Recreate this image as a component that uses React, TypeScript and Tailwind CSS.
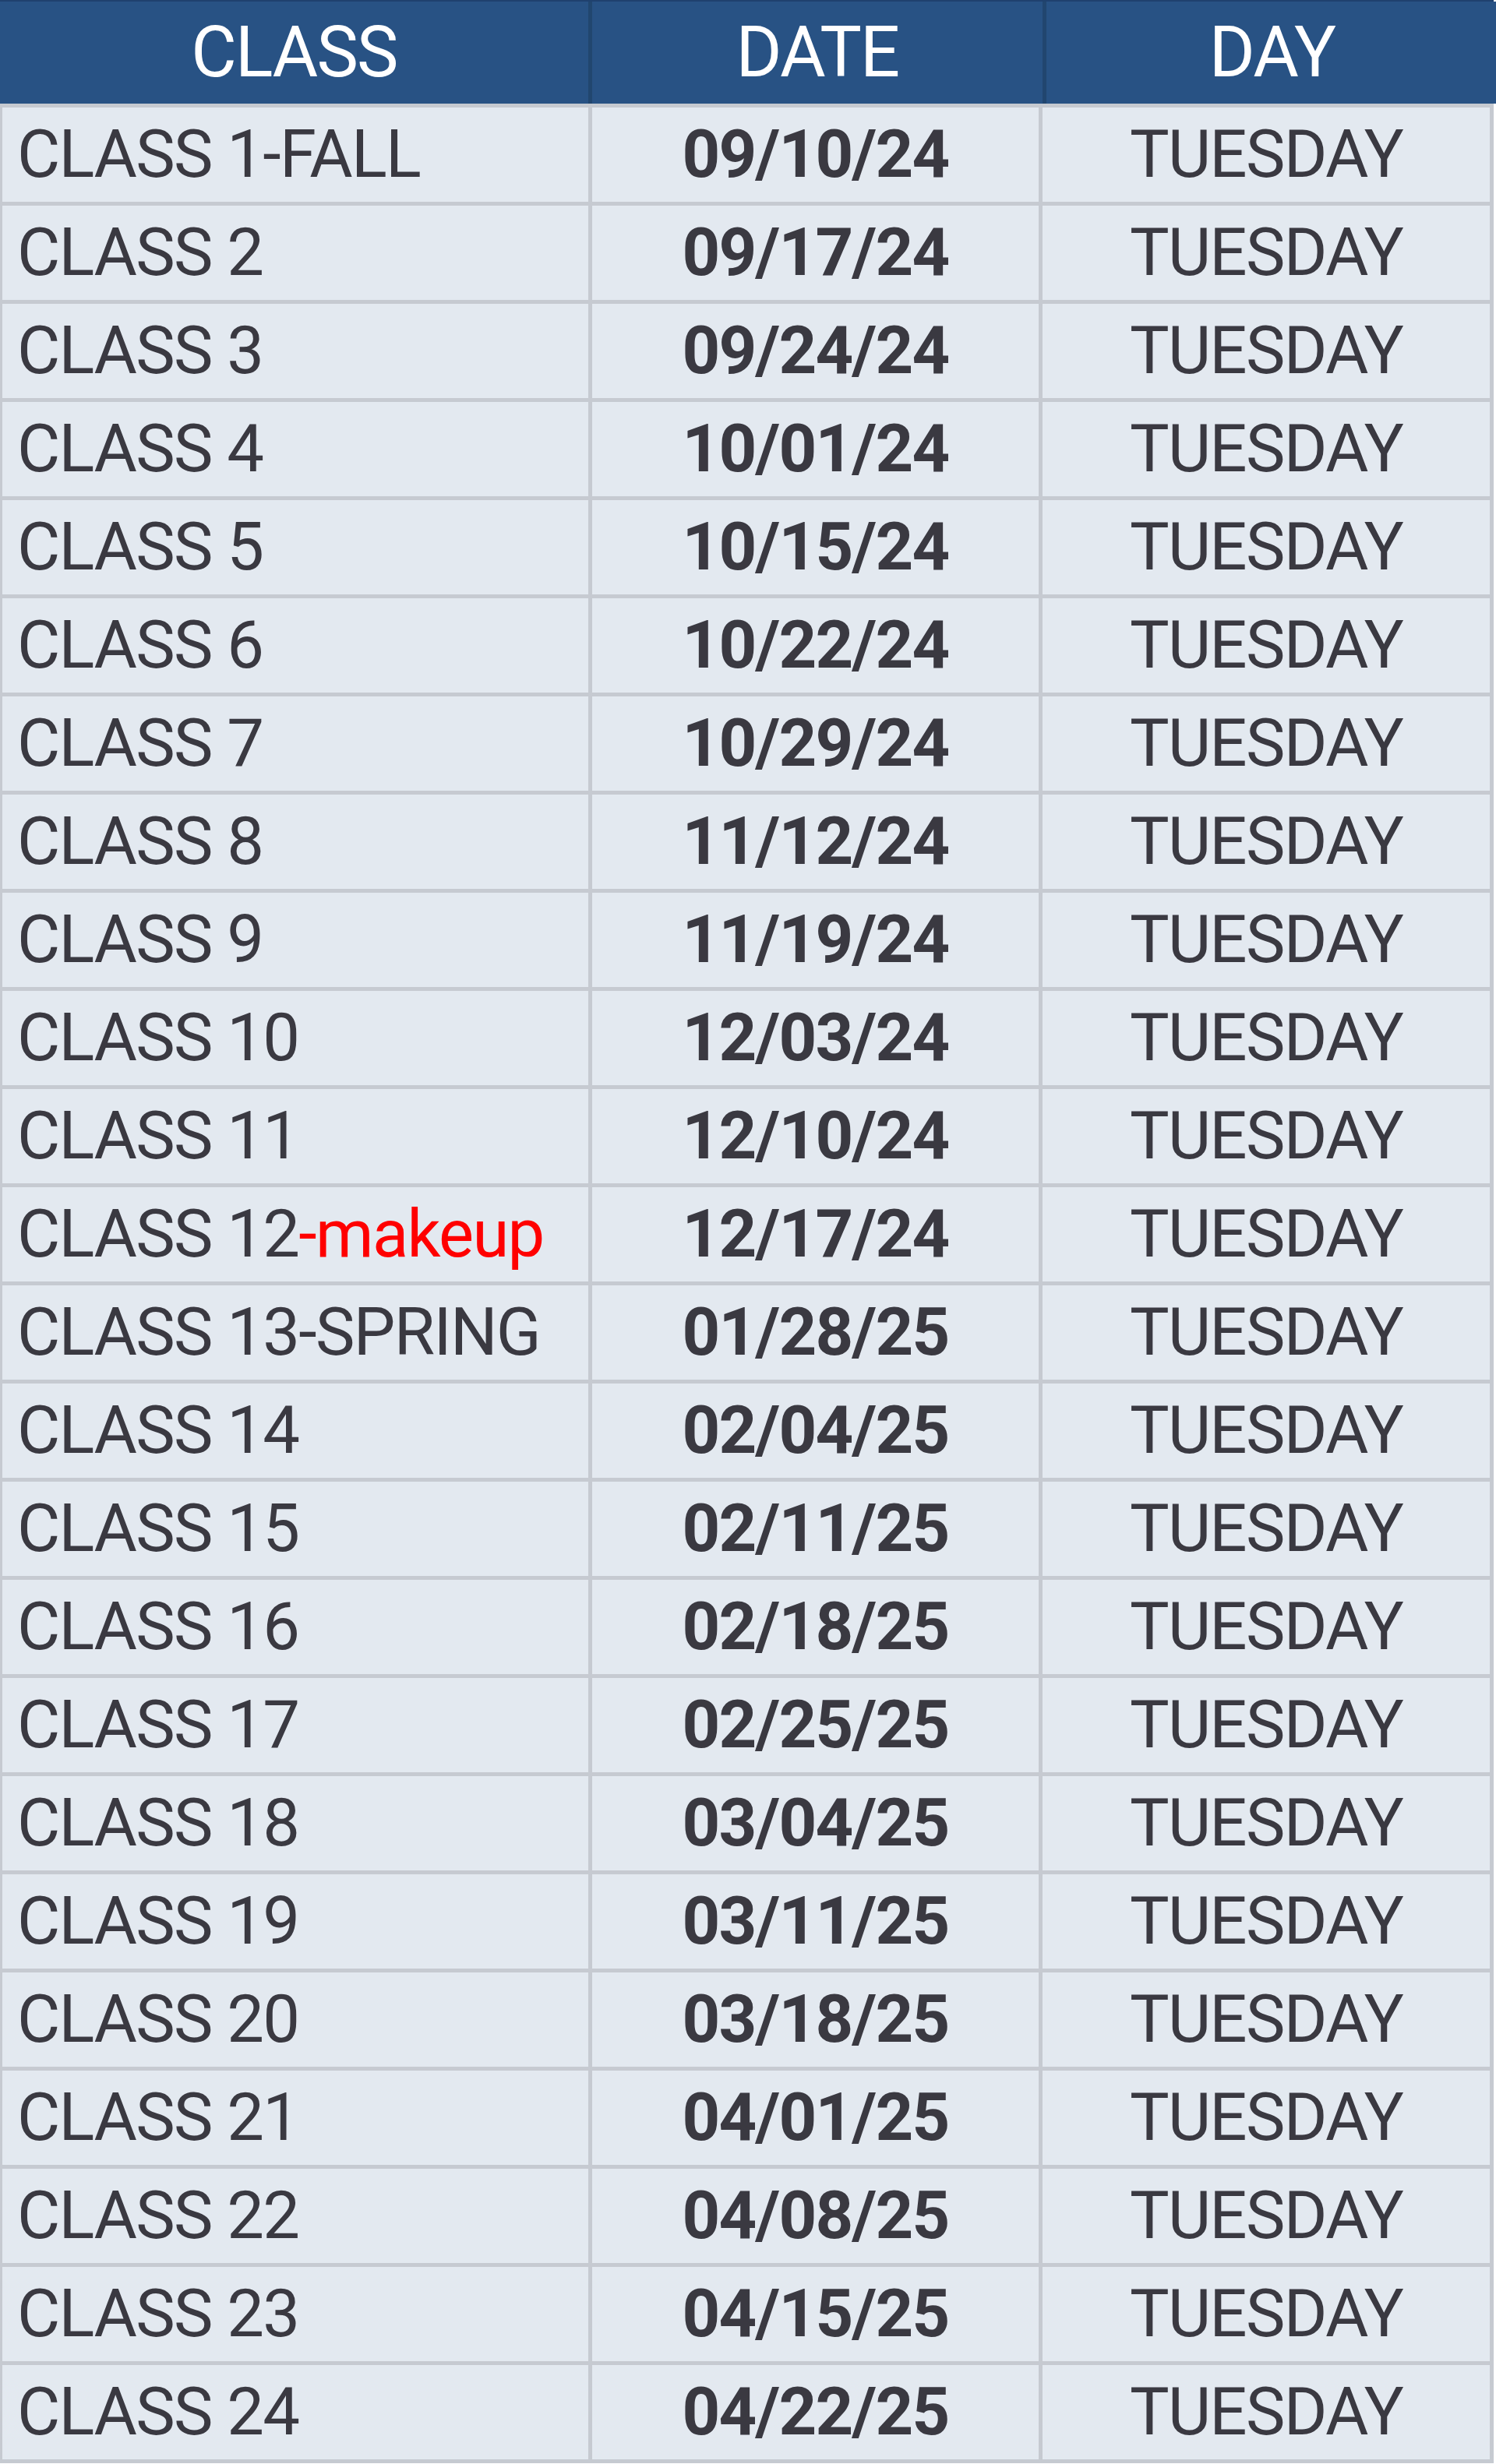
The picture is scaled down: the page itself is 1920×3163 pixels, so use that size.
const rows: { label: string; extra?: string; date: string }[] = [
  { label: "CLASS 1-FALL", date: "09/10/24" },
  { label: "CLASS 2", date: "09/17/24" },
  { label: "CLASS 3", date: "09/24/24" },
  { label: "CLASS 4", date: "10/01/24" },
  { label: "CLASS 5", date: "10/15/24" },
  { label: "CLASS 6", date: "10/22/24" },
  { label: "CLASS 7", date: "10/29/24" },
  { label: "CLASS 8", date: "11/12/24" },
  { label: "CLASS 9", date: "11/19/24" },
  { label: "CLASS 10", date: "12/03/24" },
  { label: "CLASS 11", date: "12/10/24" },
  { label: "CLASS 12", extra: "-makeup", date: "12/17/24" },
  { label: "CLASS 13-SPRING", date: "01/28/25" },
  { label: "CLASS 14", date: "02/04/25" },
  { label: "CLASS 15", date: "02/11/25" },
  { label: "CLASS 16", date: "02/18/25" },
  { label: "CLASS 17", date: "02/25/25" },
  { label: "CLASS 18", date: "03/04/25" },
  { label: "CLASS 19", date: "03/11/25" },
  { label: "CLASS 20", date: "03/18/25" },
  { label: "CLASS 21", date: "04/01/25" },
  { label: "CLASS 22", date: "04/08/25" },
  { label: "CLASS 23", date: "04/15/25" },
  { label: "CLASS 24", date: "04/22/25" },
];

export default function App() {
  return (
    <div className="min-h-[3163px] bg-white font-['Roboto',sans-serif]">
      <div className="w-[1917px] bg-[#c6cad1] pb-[5px]">
        {/* header */}
        <div className="grid h-[133px] grid-cols-[755px_578px_579px] gap-x-[5px] border-t-2 border-[#1f416e] bg-[#21466f]">
          {["CLASS", "DATE", "DAY"].map((h) => (
            <div
              key={h}
              className="flex items-center justify-center bg-[#285284] text-[90px] leading-none tracking-[-0.02em] text-white"
            >
              {h}
            </div>
          ))}
        </div>

        {/* body */}
        <div className="grid grid-cols-[752px_573px_574px] gap-x-[5px] gap-y-[5px] pl-[3px] pr-[5px] pt-[5px]">
          {rows.map((row) => (
            <div key={row.label} className="contents">
              <div className="flex h-[121px] items-center bg-[#e3e9f0] pl-[19px] text-[85px] leading-none tracking-[-0.02em] text-[#3a3941]">
                {row.label}
                {row.extra ? <span className="text-[#ff0000]">{row.extra}</span> : null}
              </div>
              <div className="flex h-[121px] items-center justify-center bg-[#e3e9f0] text-[85px] font-bold leading-none tracking-[-0.02em] text-[#3a3941]">
                {row.date}
              </div>
              <div className="flex h-[121px] items-center justify-center bg-[#e3e9f0] text-[85px] leading-none tracking-[-0.02em] text-[#3a3941]">
                TUESDAY
              </div>
            </div>
          ))}
        </div>
      </div>
    </div>
  );
}
